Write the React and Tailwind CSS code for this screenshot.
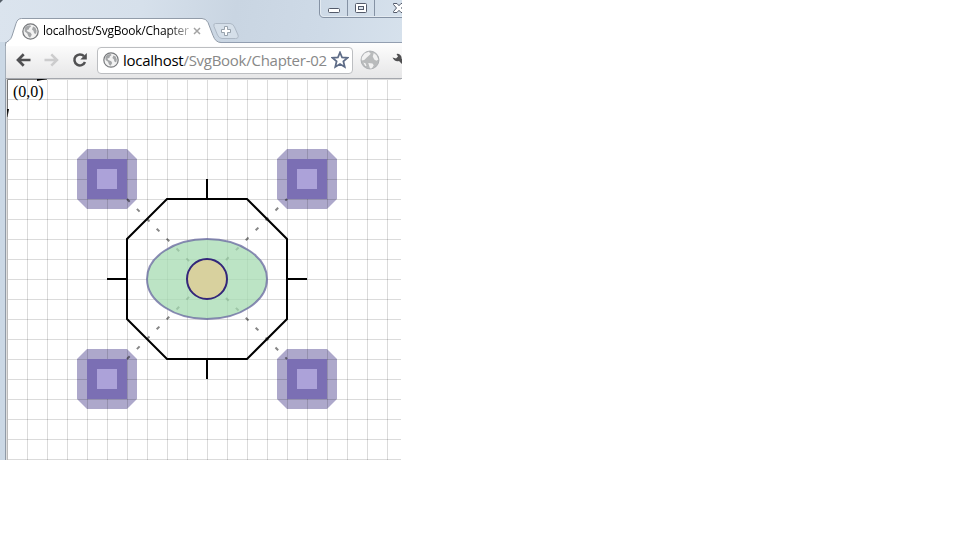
import React from "react";

function Globe({ light = false, size = 16 }) {
  const rim = light ? "#a2a6aa" : "#77797c";
  const sea = light ? "#b9bbbc" : "#a4a6a8";
  return (
    <svg width={size} height={size} viewBox="0 0 16 16" className="shrink-0">
      <circle cx="8" cy="8" r="7.2" fill={light ? sea : "#f2f2f2"} stroke={rim} strokeWidth={light ? 0.6 : 1.2} />
      {light ? (
        <path d="M1.400 6 3.600 2.800 7 1.400 8.600 3 7 4.600 5.400 6 3.400 8 1.400 8.400ZM11 2.400l2.200 1.800 1.500 3.400-1.600 1-1.700-1-1.200-2.400ZM6.600 10.400l3.400.4 1 1.400L9.600 14.500l-1.600.3ZM2.600 10l1.800.6.8 2-1 .2Z" fill="#f2f2f2" />
      ) : (
        <path d="M2.400 4.800 4.600 2.600 7.600 2 8.600 3 6.800 4.600 6.400 6 4.400 6.600 5.200 8 8.200 9.200 9.200 11 7.600 13.800 6 12.400 5 9.800 2.600 8ZM10.400 3.400l2.200 1 1.200 3-.6 3-1.800-.8-.6-2.400-1.400-1.200Z" fill={sea} />
      )}
    </svg>
  );
}

function TitleBar() {
  return (
    <header className="relative h-[42px] bg-[linear-gradient(100deg,#dbe4ee_0%,#d6e0eb_35%,#c9d5e2_58%,#cedae7_80%,#d6e1ec_100%)]">
      <svg className="absolute inset-0" width="402" height="46" viewBox="0 0 402 46">
        <path d="M0 0H3L0 3Z" fill="#555e68" />
        <path d="M214 42.500H402" stroke="#929eb0" />
        <path d="M5.500 46V44Q6 42 9 40.500Q11 39 12 36L16 23.500Q17.500 18.500 21.500 18.500H202Q206 18.500 208 22.500L213 35.500Q215.500 42.500 221 42.500V46Z" fill="#fff" />
        <path d="M5.500 46V44Q6 42 9 40.500Q11 39 12 36L16 23.500Q17.500 18.500 21.500 18.500H202Q206 18.500 208 22.500L213 35.500Q215.500 42.500 221 42.500" fill="none" stroke="#929ca9" />
        <path d="M215.500 23.500H230Q233 23.500 234.500 27L238 35Q239 38.500 235.500 38.500H222Q219 38.500 217.500 35L214 26.500Q213 23.500 215.500 23.500Z" fill="#d5dfe9" stroke="#adb8c5" />
        <path d="M224.500 26.500h3v3h3v3h-3v3h-3v-3h-3v-3h3Z" fill="#fff" stroke="#909aa5" strokeWidth=".9" />
        <path d="M319.500 0V13Q319.500 17.500 324 17.500H402M347.500 0V17M374.500 0V17" fill="none" stroke="#8592a4" />
        <path d="M320.500 0V13Q320.500 16.500 324 16.500H402" fill="none" stroke="#e4ebf2" />
        <rect x="328.500" y="8.500" width="11" height="4" rx="1" fill="#fff" stroke="#535a6a" />
        <rect x="355.500" y="3.500" width="11" height="9" rx="1" fill="#fff" stroke="#535a6a" />
        <rect x="358.500" y="6.500" width="5" height="3" fill="#dce4ed" stroke="#535a6a" />
        <path d="M393.500 3.500h3.500l2 2.200 2-2.200h3.500v1L401.500 8l3 3.500v1H401l-2-2.200-2 2.200h-3.500v-1l3-3.500-3-3.500Z" fill="#fff" stroke="#535a6a" />
      </svg>
      <div className="relative ml-[22px] flex h-[42px] w-[182px] items-center pt-[20px]">
        <Globe size={17} />
        <span className="ml-[4px] w-[146px] overflow-hidden whitespace-nowrap bg-[linear-gradient(90deg,#000_85%,#bbb_100%)] bg-clip-text font-['Open_Sans',sans-serif] text-[12px] leading-[18px] tracking-[-0.23px] text-transparent">
          localhost/SvgBook/Chapter
        </span>
        <svg width="8" height="8" viewBox="0 0 8 8" className="ml-[4px] shrink-0">
          <path d="M1 1l6 6M7 1l-6 6" stroke="#a3a3a3" strokeWidth="1.500" />
        </svg>
      </div>
    </header>
  );
}

function Toolbar() {
  return (
    <div className="ml-[5px] flex h-[37px] items-center border-b border-l border-b-[#a4a7ad] border-l-[#a5afba] bg-[linear-gradient(#fefefe,#e6e6e7)] pl-[10px]">
      <svg width="15" height="14" viewBox="0 0 15 14" className="shrink-0">
        <path d="M14.500 7H3M7.700 1.300 2 7l5.700 5.700" fill="none" stroke="#505052" strokeWidth="2.700" />
      </svg>
      <svg width="15" height="14" viewBox="0 0 15 14" className="ml-[13px] shrink-0">
        <path d="M.5 7H12M7.300 1.300 13 7l-5.700 5.700" fill="none" stroke="#cccccd" strokeWidth="2.500" />
      </svg>
      <svg width="16" height="16" viewBox="0 0 16 16" className="ml-[13px] shrink-0">
        <path d="M12 4.200A5.500 5.500 0 1 0 13 10" fill="none" stroke="#505052" strokeWidth="2.500" />
        <path d="M14.800 1V7.500H8.300Z" fill="#505052" />
      </svg>
      <div className="ml-[9px] flex h-[27px] w-[256px] shrink-0 items-center rounded-[4px] border border-[#bcbec1] bg-white pl-[5px]">
        <Globe />
        <span className="ml-[4px] w-[207px] whitespace-nowrap font-['Open_Sans',sans-serif] text-[15px] leading-[20px] tracking-[-0.27px] text-[#888]">
          <span className="text-black">localhost</span>/SvgBook/Chapter-02
        </span>
        <svg width="18" height="18" viewBox="0 0 18 18" className="ml-[1px] shrink-0">
          <path d="m9 1.500 2.100 5 5.400.4-4.100 3.500 1.300 5.500L9 13l-4.700 2.900 1.300-5.500L1.500 6.900l5.400-.4Z" fill="#fff" stroke="#5e6c87" strokeWidth="1.800" />
        </svg>
      </div>
      <div className="ml-[7px] flex shrink-0"><Globe light size={20} /></div>
      <svg width="12" height="14" viewBox="0 0 12 14" className="-mt-[2px] ml-[12px] shrink-0">
        <path d="M4.500 2A4 4 0 0 1 9.500 6.500L14 11l-2.500 2.500L7 9Q2.500 10 .5 5.500L4 6.500 6 4.500Z" fill="#505052" />
      </svg>
    </div>
  );
}

const lines = Array.from({ length: 19 }, (_, i) => (i + 1) * 20 + 0.5);
const corners = [[100, 100], [300, 100], [100, 300], [300, 300]];

function Drawing() {
  return (
    <svg width="395" height="381" viewBox="0 0 395 381" className="block">
      <rect width="395" height="381" fill="#fff" />
      {corners.map(([x, y]) => (
        <path key={`${x}-${y}`} transform={`translate(${x} ${y})`} d="M-20-30H20L30-20V20L20 30H-20L-30 20V-20Z" fill="#ada8cb" />
      ))}
      <g stroke="#000" strokeOpacity=".14">
        {lines.map((x) => <path key={x} d={`M${x} 0V381`} />)}
        {lines.map((y) => <path key={y} d={`M0 ${y}H394`} />)}
      </g>
      {corners.map(([x, y]) => (
        <g key={`${x}-${y}`} transform={`translate(${x} ${y})`}>
          <rect x="-20" y="-20" width="40" height="40" fill="#7b6fb4" />
          <rect x="-10" y="-10" width="20" height="20" fill="#aca2d9" />
        </g>
      ))}
      <path d="M160 120H240L280 160V240L240 280H160L120 240V160Z" fill="none" stroke="#000" strokeWidth="2" />
      <path d="M200 100V120M200 280V300M100 200H120M280 200H300" stroke="#000" strokeWidth="2" />
      <path d="M120 120 280 280M120 280 280 120" stroke="#000" strokeOpacity=".48" strokeWidth="2" strokeDasharray="3.800 10.200" />
      <ellipse cx="200" cy="200" rx="60" ry="40" fill="#a6dbb1" fillOpacity=".75" stroke="#66669d" strokeOpacity=".75" strokeWidth="2" />
      <circle cx="200" cy="200" r="20" fill="#d8d19e" stroke="#33267a" strokeWidth="2" />
      <path d="M.5 381V.5" fill="none" stroke="#bbb" />
      <path d="M.5 38V.5H40" fill="none" stroke="#777" />
      <path d="M40 .5H394" fill="none" stroke="#ddd" />
      <path d="M30 0H40L30 2ZM0 30H2L.5 38Z" fill="#000" />
      <text x="6" y="18" fontFamily="Liberation Serif, serif" fontSize="16" fill="#000">(0,0)</text>
    </svg>
  );
}

export default function App() {
  return (
    <main className="h-[540px] w-[960px] overflow-hidden bg-white">
      <section className="h-[460px] w-[402px] overflow-hidden bg-[#cbd8e5]">
        <TitleBar />
        <Toolbar />
        <div className="ml-[5px] flex border-l border-[#8f9aa7] bg-[#dedede] pl-[1px]">
          <Drawing />
        </div>
      </section>
    </main>
  );
}
